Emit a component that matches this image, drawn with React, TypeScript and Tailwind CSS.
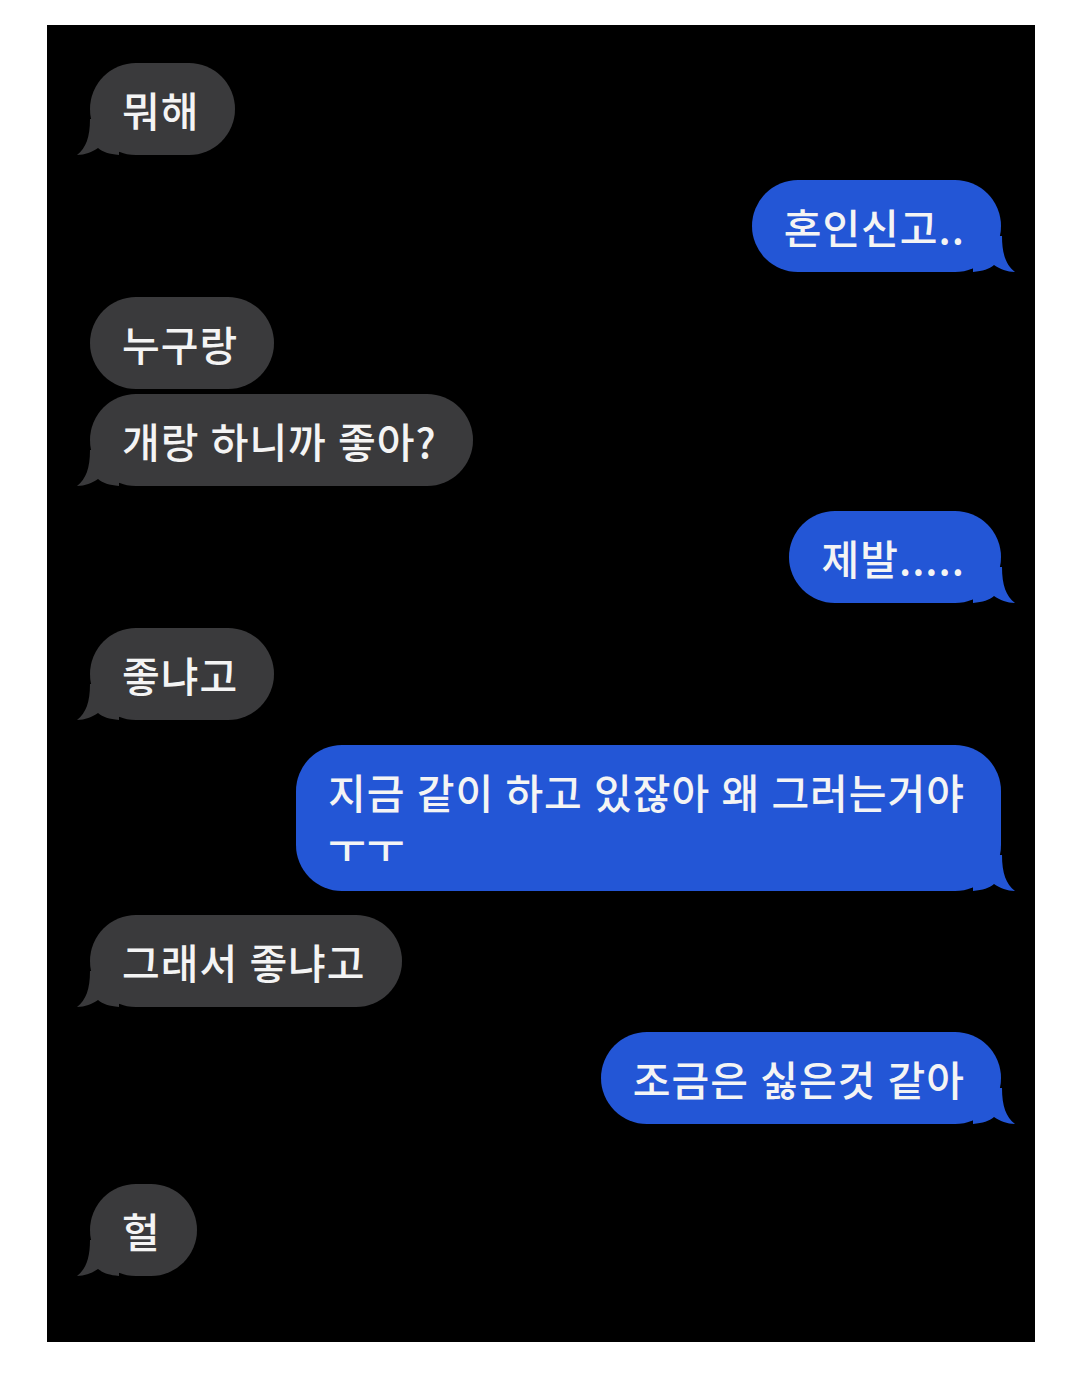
const font = { fontFamily: '"Noto Sans CJK KR", "Noto Sans", sans-serif', wordSpacing: "1px" };

type Msg = { text: React.ReactNode; me: boolean; tail: boolean; gap: string };

const msgs: Msg[] = [
  { text: "뭐해", me: false, tail: true, gap: "mt-[38px]" },
  { text: "혼인신고..", me: true, tail: true, gap: "mt-[25px]" },
  { text: "누구랑", me: false, tail: false, gap: "mt-[25px]" },
  { text: "개랑 하니까 좋아?", me: false, tail: true, gap: "mt-[5px]" },
  { text: "제발.....", me: true, tail: true, gap: "mt-[25px]" },
  { text: "좋냐고", me: false, tail: true, gap: "mt-[25px]" },
  {
    text: (
      <>
        지금 같이 하고 있잖아 왜 그러는거야
        <br />
        ㅜㅜ
      </>
    ),
    me: true,
    tail: true,
    gap: "mt-[25px]",
  },
  { text: "그래서 좋냐고", me: false, tail: true, gap: "mt-[24px]" },
  { text: "조금은 싫은것 같아", me: true, tail: true, gap: "mt-[25px]" },
  { text: "헐", me: false, tail: true, gap: "mt-[60px]" },
];

// iMessage-style tail, drawn for the left side and mirrored for the right
function Tail({ me }: { me: boolean }) {
  return (
    <svg
      className={`absolute bottom-0 h-[36px] w-[42px] ${me ? "right-[-14px] -scale-x-100" : "left-[-13px]"}`}
      viewBox="0 0 42 36"
    >
      <path
        d="M13 0 C13 18 9 29 0 36 C8 36 15 33 21 29 C26 33 32 35 42 36 L42 0 Z"
        fill={me ? "#2356d6" : "#3a3a3c"}
      />
    </svg>
  );
}

function Bubble({ m }: { m: Msg }) {
  return (
    <div className={`flex ${m.me ? "justify-end" : "justify-start"} ${m.gap}`}>
      <div
        className={`relative rounded-[46px] py-[19px] pl-[32px] pr-[36px] text-[41px] font-medium leading-[54px] tracking-[1px] text-[#f4f4f4] ${
          m.me ? "bg-[#2356d6]" : "bg-[#3a3a3c]"
        }`}
      >
        {m.tail && <Tail me={m.me} />}
        <span className="relative">{m.text}</span>
      </div>
    </div>
  );
}

export default function App() {
  return (
    <div className="h-[1379px] w-[1080px] bg-white pl-[47px] pt-[25px]" style={font}>
      <div className="flex h-[1317px] w-[988px] flex-col bg-black pl-[43px] pr-[34px]">
        {msgs.map((m, i) => (
          <Bubble key={i} m={m} />
        ))}
      </div>
    </div>
  );
}
